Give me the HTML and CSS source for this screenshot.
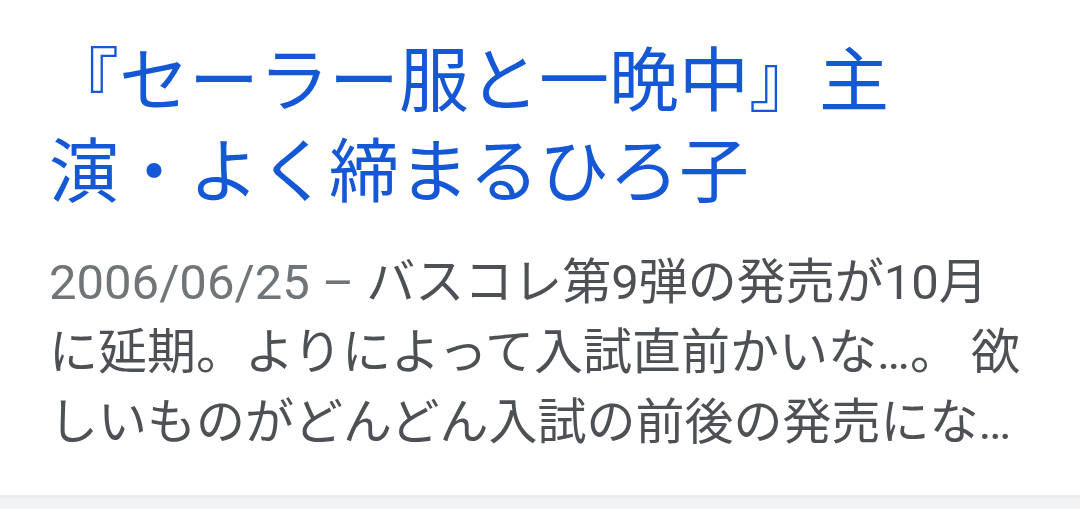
FILE: index.html
```html
<!DOCTYPE html>
<html lang="ja">
<head>
  <meta charset="UTF-8">
  <meta name="viewport" content="width=device-width, initial-scale=1.0">
  <title>『セーラー服と一晩中』主演・よく締まるひろ子</title>
  <link rel="stylesheet" href="styles.css">
</head>
<body>
  <div class="result">
    <a class="result-title" href="#">『セーラー服と一晩中』主演・よく締まるひろ子</a>
    <p class="result-snippet"><span class="result-date">2006/06/25 – </span>バスコレ第9弾の発売が10月に延期。よりによって入試直前かいな…。 欲しいものがどんどん入試の前後の発売にな…</p>
  </div>
  <div class="result-gap"></div>
</body>
</html>
```

FILE: styles.css
```css
body {
  margin: 0;
  background: #fff;
  font-family: Roboto, "Noto Sans CJK JP", sans-serif;
}

.result {
  padding: 37px 49px 37px 49px;
  border-bottom: 3px solid #ebebeb;
}

.result-title {
  display: block;
  max-width: 860px;
  color: #1558d6;
  font-size: 70px;
  line-height: 91px;
  text-decoration: none;
}

.result-snippet {
  margin: 29px 0 0 0;
  color: #4d5156;
  font-size: 49px;
  line-height: 70px;
}

.result-date {
  color: #70757a;
}

.result-gap {
  height: 11px;
  background: #f1f3f4;
}
```
